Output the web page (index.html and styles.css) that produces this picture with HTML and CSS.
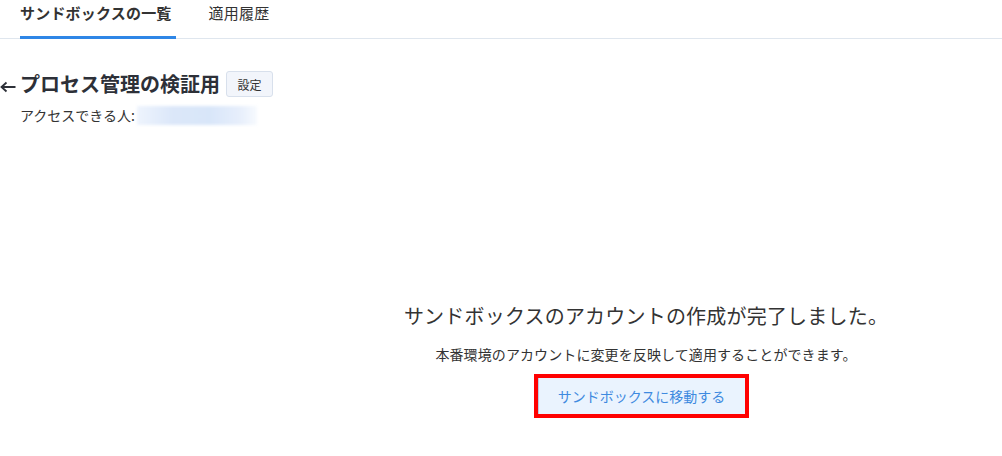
FILE: index.html
```html
<!DOCTYPE html>
<html lang="ja">
<head>
<meta charset="utf-8">
<title>サンドボックスの一覧</title>
<link rel="stylesheet" href="styles.css">
</head>
<body>
<nav class="tabs">
  <a class="tab active">サンドボックスの一覧</a>
  <a class="tab">適用履歴</a>
</nav>
<header class="head">
  <div class="title-row">
    <span class="back">
      <svg width="16" height="12" viewBox="0 0 16 12" aria-hidden="true"><path d="M15.5 6H1.5M6.5 1.5L1.5 6L6.5 10.5" fill="none" stroke="#2d3038" stroke-width="1.8"/></svg>
    </span>
    <h1 class="title">プロセス管理の検証用</h1>
    <button class="settings">設定</button>
  </div>
  <div class="access">アクセスできる人:<span class="blur"></span></div>
</header>
<section class="message">
  <p class="msg-title">サンドボックスのアカウントの作成が完了しました。</p>
  <p class="msg-sub">本番環境のアカウントに変更を反映して適用することができます。</p>
  <div class="highlight"><button class="go">サンドボックスに移動する</button></div>
</section>
</body>
</html>
```
FILE: styles.css
```css
* { box-sizing: border-box; }
html, body { margin: 0; background: #fff; }
body {
  font-family: "Noto Sans CJK JP", "Noto Sans", sans-serif;
  color: #333;
  width: 1002px;
  height: 456px;
  overflow: hidden;
}
.tabs {
  display: flex;
  gap: 33px;
  height: 39px;
  padding-left: 20px;
  border-bottom: 1px solid #dfe6ee;
}
.tab {
  height: 39px;
  margin-bottom: -1px;
  font-size: 15px;
  letter-spacing: 0.2px;
  line-height: 25px;
  color: #333;
  border-bottom: 3px solid transparent;
  padding-right: 4px;
}
.tab.active {
  font-weight: 700;
  border-bottom-color: #2e86e6;
}
.head { margin-top: 32px; }
.title-row {
  display: flex;
  align-items: center;
  height: 26px;
}
.back {
  width: 20px;
  display: flex;
  align-items: center;
  padding-top: 5px;
}
.title {
  margin: 0;
  font-size: 20px;
  font-weight: 700;
  line-height: 26px;
  color: #2d3038;
}
.settings {
  margin-left: 6px;
  height: 26px;
  width: 47px;
  padding: 0;
  font-family: inherit;
  font-size: 12px;
  color: #333;
  background: #f2f5fb;
  border: 1px solid #d8e0ec;
  border-radius: 3px;
}
.access {
  margin-top: 8px;
  padding-left: 20px;
  font-size: 14px;
  line-height: 20px;
  display: flex;
  align-items: center;
}
.blur {
  display: inline-block;
  width: 120px;
  height: 19px;
  margin-left: 2px;
  background: linear-gradient(90deg, #eef4fd 0%, #dbe7f9 30%, #d8e6f9 60%, #e6eefb 85%, #f7fafe 100%);
  filter: blur(1.5px);
}
.message {
  margin-top: 176px;
  padding-left: 280px;
  display: flex;
  flex-direction: column;
  align-items: center;
}
.msg-title {
  margin: 0;
  padding-left: 10px;
  font-size: 20px;
  letter-spacing: 0.2px;
  line-height: 30px;
  color: #333;
}
.msg-sub {
  margin: 13px 0 0;
  padding-left: 10px;
  font-size: 14px;
  letter-spacing: 0.1px;
  line-height: 20px;
  color: #333;
}
.highlight {
  margin-top: 10px;
  border: 4px solid #ff0000;
}
.go {
  display: block;
  height: 36px;
  width: 207px;
  padding: 0;
  font-family: inherit;
  font-size: 14px;
  color: #3f8ae0;
  background: #eaf3fe;
  border: 0;
  border-left: 1px solid #b9cbe4;
}
```
